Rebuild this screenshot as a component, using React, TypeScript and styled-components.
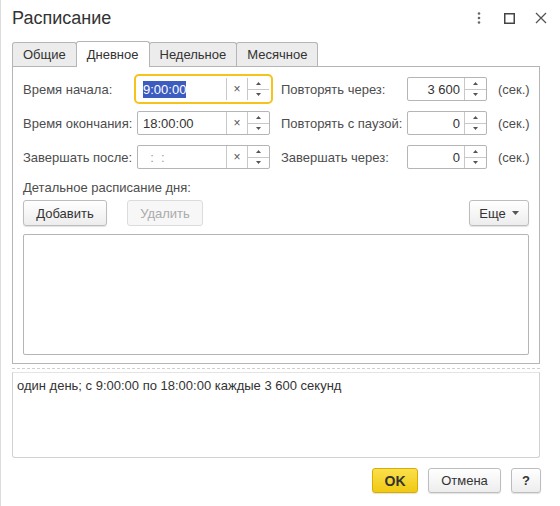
import React from "react";
import styled, { createGlobalStyle, css } from "styled-components";

const GlobalStyle = createGlobalStyle`
  html, body {
    margin: 0;
    padding: 0;
    background: #ffffff;
  }
  * {
    box-sizing: border-box;
  }
`;

const Window = styled.div`
  width: 560px;
  height: 506px;
  background: #ffffff;
  border-left: 1px solid #dcdcdc;
  display: flex;
  flex-direction: column;
  font-family: "Liberation Sans", Arial, sans-serif;
  font-size: 13px;
  color: #4d4d4d;
  overflow: hidden;
`;

const Header = styled.div`
  height: 36px;
  display: flex;
  align-items: center;
  padding: 0 4px 0 11px;
`;

const Title = styled.div`
  flex: 1;
  font-size: 18px;
  color: #333333;
`;

const HeaderButton = styled.div`
  width: 31px;
  height: 24px;
  display: flex;
  align-items: center;
  justify-content: center;
  color: #555555;
`;

const TabBar = styled.div`
  display: flex;
  align-items: flex-end;
  margin: 5px 0 0 11px;
  height: 25px;
`;

const Tab = styled.div<{ active?: boolean }>`
  height: 24px;
  padding: 0 10px;
  display: flex;
  align-items: center;
  border: 1px solid #b5b5b5;
  border-bottom: none;
  border-radius: 3px 3px 0 0;
  background: #ececec;
  color: #333333;
  margin-right: -1px;
  position: relative;
  ${(p) =>
    p.active &&
    css`
      height: 26px;
      margin-bottom: -1px;
      background: #ffffff;
      z-index: 1;
    `}
`;

const Panel = styled.div`
  margin: 0 20px 0 11px;
  height: 298px;
  border: 1px solid #b5b5b5;
  padding: 10px 10px 8px 10px;
  display: flex;
  flex-direction: column;
`;

const FormGrid = styled.div`
  display: grid;
  grid-template-columns: 114px 133px 137px 80px auto;
  grid-auto-rows: 24px;
  row-gap: 10px;
  align-items: center;
`;

const Label = styled.div<{ indent?: number }>`
  white-space: nowrap;
  padding-left: ${(p) => p.indent || 0}px;
`;

const FieldBox = styled.div<{ focused?: boolean }>`
  height: 24px;
  border: 1px solid #b5b5b5;
  border-radius: 2px;
  background: #ffffff;
  display: flex;
  align-items: stretch;
  color: #333333;
  ${(p) =>
    p.focused &&
    css`
      border-color: #ffffff;
      outline: 2px solid #f6c21c;
      outline-offset: 1px;
    `}
`;

const FieldText = styled.div<{ align?: string; empty?: boolean }>`
  flex: 1;
  display: flex;
  align-items: center;
  justify-content: ${(p) => (p.align === "right" ? "flex-end" : "flex-start")};
  padding: 0 4px 0 5px;
  color: ${(p) => (p.empty ? "#9a9a9a" : "#333333")};
  white-space: pre;
`;

const Selected = styled.span`
  background: #3d5cbf;
  color: #ffffff;
  padding: 1px 0;
`;

const ClearButton = styled.div`
  width: 21px;
  border-left: 1px solid #c8c8c8;
  display: flex;
  align-items: center;
  justify-content: center;
  color: #555555;
  font-size: 12px;
`;

const Spinner = styled.div`
  width: 22px;
  border-left: 1px solid #c8c8c8;
  display: flex;
  flex-direction: column;
`;

const SpinHalf = styled.div<{ top?: boolean }>`
  flex: 1;
  display: flex;
  align-items: center;
  justify-content: center;
  ${(p) => p.top && "border-bottom: 1px solid #c8c8c8;"}
`;

const Unit = styled.div`
  padding-left: 11px;
  white-space: nowrap;
`;

const SectionLabel = styled.div`
  margin-top: 11px;
  line-height: 15px;
`;

const ButtonRow = styled.div`
  display: flex;
  align-items: center;
  gap: 20px;
  margin-top: 5px;
  height: 26px;
`;

const Button = styled.div<{ w: number; disabled?: boolean; primary?: boolean; bold?: boolean }>`
  width: ${(p) => p.w}px;
  height: 26px;
  border: 1px solid #bdbdbd;
  border-radius: 3px;
  background: linear-gradient(#ffffff, #ededed);
  box-shadow: 0 1px 1px rgba(0, 0, 0, 0.12);
  display: flex;
  align-items: center;
  justify-content: center;
  gap: 6px;
  color: #333333;
  ${(p) => p.bold && "font-weight: bold;"}
  ${(p) =>
    p.disabled &&
    css`
      color: #ababab;
      border-color: #dcdcdc;
      box-shadow: none;
      background: #f7f7f7;
    `}
  ${(p) =>
    p.primary &&
    css`
      background: linear-gradient(#fbe04c, #f1c913);
      border-color: #d6ae00;
      font-weight: bold;
      font-size: 14px;
    `}
`;

const Spacer = styled.div`
  flex: 1;
`;

const ListBox = styled.div`
  margin-top: 8px;
  flex: 1;
  border: 1px solid #b5b5b5;
  border-radius: 2px;
`;

const Splitter = styled.div`
  margin: 4px 20px 0 11px;
  border-top: 1px dashed #cfcfcf;
`;

const Description = styled.div`
  margin: 3px 20px 0 11px;
  height: 86px;
  border: 1px solid #d2d2d2;
  border-top-color: #e4e4e4;
  border-radius: 0 0 3px 3px;
  padding: 5px 4px;
  color: #333333;
  line-height: 15px;
`;

const Footer = styled.div`
  display: flex;
  justify-content: flex-end;
  gap: 10px;
  margin: 10px 19px 0 0;
`;

const FooterButton = styled(Button)`
  height: 25px;
`;

const Arrow = ({ up }: { up?: boolean }) => (
  <svg width="5" height="3" viewBox="0 0 5 3">
    <path d={up ? "M0 3 L2.5 0 L5 3 Z" : "M0 0 L2.5 3 L5 0 Z"} fill="#555" />
  </svg>
);

const Spin = () => (
  <Spinner>
    <SpinHalf top>
      <Arrow up />
    </SpinHalf>
    <SpinHalf>
      <Arrow />
    </SpinHalf>
  </Spinner>
);

interface TimeFieldProps {
  value: React.ReactNode;
  focused?: boolean;
  empty?: boolean;
}

const TimeField = ({ value, focused, empty }: TimeFieldProps) => (
  <FieldBox focused={focused}>
    <FieldText empty={empty}>{value}</FieldText>
    <ClearButton>×</ClearButton>
    <Spin />
  </FieldBox>
);

const NumberField = ({ value }: { value: string }) => (
  <FieldBox>
    <FieldText align="right">{value}</FieldText>
    <Spin />
  </FieldBox>
);

const App = () => {
  return (
    <>
      <GlobalStyle />
      <Window>
        <Header>
          <Title>Расписание</Title>
          <HeaderButton>
            <svg width="4" height="12" viewBox="0 0 4 12">
              <circle cx="2" cy="1.5" r="1.3" fill="#666" />
              <circle cx="2" cy="6" r="1.3" fill="#666" />
              <circle cx="2" cy="10.5" r="1.3" fill="#666" />
            </svg>
          </HeaderButton>
          <HeaderButton>
            <svg width="11" height="11" viewBox="0 0 11 11">
              <rect x="0.75" y="0.75" width="9.5" height="9.5" fill="none" stroke="#444" strokeWidth="1.5" />
            </svg>
          </HeaderButton>
          <HeaderButton>
            <svg width="12" height="12" viewBox="0 0 12 12">
              <path d="M1 1 L11 11 M11 1 L1 11" stroke="#555" strokeWidth="1.3" />
            </svg>
          </HeaderButton>
        </Header>

        <TabBar>
          <Tab>Общие</Tab>
          <Tab active>Дневное</Tab>
          <Tab>Недельное</Tab>
          <Tab>Месячное</Tab>
        </TabBar>

        <Panel>
          <FormGrid>
            <Label>Время начала:</Label>
            <TimeField focused value={<Selected>9:00:00</Selected>} />
            <Label indent={11}>Повторять через:</Label>
            <NumberField value="3 600" />
            <Unit>(сек.)</Unit>

            <Label>Время окончания:</Label>
            <TimeField value="18:00:00" />
            <Label indent={11}>Повторять с паузой:</Label>
            <NumberField value="0" />
            <Unit>(сек.)</Unit>

            <Label>Завершать после:</Label>
            <TimeField empty value={"  :  :"} />
            <Label indent={11}>Завершать через:</Label>
            <NumberField value="0" />
            <Unit>(сек.)</Unit>
          </FormGrid>

          <SectionLabel>Детальное расписание дня:</SectionLabel>
          <ButtonRow>
            <Button w={84}>Добавить</Button>
            <Button w={76} disabled>
              Удалить
            </Button>
            <Spacer />
            <Button w={60}>
              Еще
              <svg width="7" height="4" viewBox="0 0 7 4">
                <path d="M0 0 L3.5 4 L7 0 Z" fill="#555" />
              </svg>
            </Button>
          </ButtonRow>
          <ListBox />
        </Panel>

        <Splitter />
        <Description>один день; с 9:00:00 по 18:00:00 каждые 3 600 секунд</Description>

        <Footer>
          <FooterButton w={46} primary>
            OK
          </FooterButton>
          <FooterButton w={73}>Отмена</FooterButton>
          <FooterButton w={30} bold>
            ?
          </FooterButton>
        </Footer>
      </Window>
    </>
  );
};

export default App;
